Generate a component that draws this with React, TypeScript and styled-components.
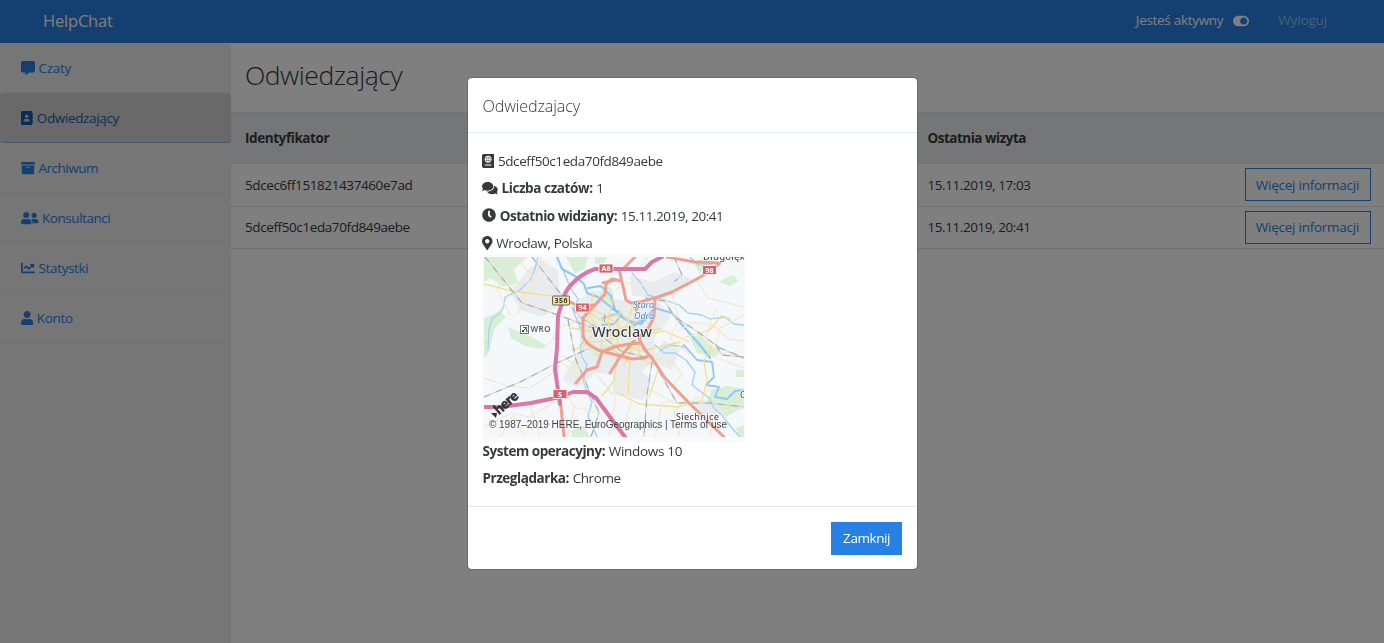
import React from "react";
import styled, { createGlobalStyle } from "styled-components";
import {
  FaAddressBook,
  FaArchive,
  FaChartLine,
  FaClock,
  FaCommentAlt,
  FaComments,
  FaMapMarkerAlt,
  FaPassport,
  FaToggleOn,
  FaUser,
  FaUserFriends,
} from "react-icons/fa";

const GlobalStyle = createGlobalStyle`
  *, *::before, *::after { box-sizing: border-box; }
  body {
    margin: 0;
    overflow: hidden;
    background: #fff;
    color: #373a3c;
    font-family: "Open Sans", "Noto Sans", sans-serif;
    font-size: 13.5px;
    line-height: 20.4px;
  }
`;

const Text = styled.span<{ $track?: number }>`
  letter-spacing: ${(p) => p.$track ?? 0}px;
  white-space: nowrap;
`;

/* Glyph widths follow the icon's own aspect ratio, given in em. */
const Icon = styled.span<{ $width: number }>`
  display: flex;
  flex: none;
  width: ${(p) => p.$width}em;
  margin: -1px 0 0 -0.5px;
  font-size: 14px;
  svg { width: 100%; height: 1em; }
`;

const Page = styled.div`
  display: flex;
  flex-direction: column;
  height: 643px;
`;

const Navbar = styled.header`
  display: flex;
  align-items: center;
  height: 43px;
  padding: 0 57px 0 43px;
  background: #2780e3;
  color: #fff;
`;

const Brand = styled.div`
  flex: 1;
  font-size: 16.5px;
`;

const Status = styled.div`
  display: flex;
  align-items: center;
  gap: 10px;
  margin: -2px 29px 0 0;
  svg { font-size: 16px; }
`;

const Logout = styled.a`
  margin-top: -2px;
  color: rgba(255, 255, 255, 0.5);
`;

const Columns = styled.div`
  display: flex;
  flex: 1;
`;

const Sidebar = styled.nav`
  width: 231px;
  background: #ececec;
`;

const NavItem = styled.a<{ $active?: boolean }>`
  display: flex;
  align-items: center;
  gap: 3.5px;
  height: 50px;
  padding: 2px 0 0 21.5px;
  border-bottom: 1px solid ${(p) => (p.$active ? "#8fb0dc" : "#e4e4e4")};
  border-radius: ${(p) => (p.$active ? "4px" : "0")};
  background: ${(p) => (p.$active ? "#d3d3d3" : "transparent")};
  color: ${(p) => (p.$active ? "#165ba8" : "#2780e3")};
`;

const Content = styled.main`
  flex: 1;
`;

const Title = styled.h1`
  margin: 0;
  height: 69px;
  padding: 14px 0 0 14px;
  font-size: 26.5px;
  line-height: 36px;
  font-weight: 300;
`;

const Row = styled.div<{ $head?: boolean }>`
  display: grid;
  grid-template-columns: 682.5px 1fr auto;
  align-items: center;
  height: ${(p) => (p.$head ? "52px" : "42.5px")};
  padding: 0 13.5px 0 14px;
  border-top: ${(p) => (p.$head ? "1px" : "0")} solid #dee2e6;
  border-bottom: 1px solid #dee2e6;
  background: ${(p) => (p.$head ? "#e9ecef" : "#fff")};
  font-weight: ${(p) => (p.$head ? 700 : 400)};
`;

const OutlineButton = styled.button`
  width: 126px;
  height: 33px;
  padding: 0;
  border: 1px solid #2780e3;
  background: transparent;
  color: #2780e3;
  font: inherit;
`;

const Backdrop = styled.div`
  position: fixed;
  inset: 0;
  display: flex;
  justify-content: center;
  align-items: flex-start;
  padding: 78px 0 0 1px;
  background: rgba(0, 0, 0, 0.5);
`;

const Dialog = styled.section`
  display: flex;
  flex-direction: column;
  width: 449px;
  height: 491px;
  border-radius: 4px;
  background: #fff;
  box-shadow: 0 0 0 1px rgba(0, 0, 0, 0.15);
`;

const DialogHeader = styled.h5`
  display: flex;
  align-items: center;
  height: 55px;
  margin: 0;
  padding: 2px 0 0 14.5px;
  border-bottom: 1px solid #e4e9ea;
  font-size: 16.2px;
  font-weight: 300;
`;

const DialogBody = styled.div`
  flex: 1;
  padding: 18px 14.5px 0;
`;

const Detail = styled.p`
  display: flex;
  align-items: center;
  gap: 3.7px;
  height: 20.4px;
  margin: 0 0 7px;
`;

const MapFrame = styled.figure`
  width: 264px;
  height: 188px;
  margin: -7px 0 -1px -1px;
  padding: 3px 2px 5px 2.5px;
  background: #f8fafc;
  svg { display: block; }
`;

const DialogFooter = styled.footer`
  display: flex;
  justify-content: flex-end;
  align-items: center;
  height: 63px;
  padding: 0 15px;
  border-top: 1px solid #e6e6e6;
`;

const PrimaryButton = styled.button`
  width: 71px;
  height: 33px;
  padding: 0;
  border: 1px solid #2780e3;
  background: #2780e3;
  color: #fff;
  font: inherit;
`;

const navigation = [
  { label: "Czaty", icon: FaCommentAlt, width: 1, track: -0.3 },
  { label: "Odwiedzający", icon: FaAddressBook, width: 0.875, active: true, track: -0.35 },
  { label: "Archiwum", icon: FaArchive, width: 1, track: -0.5 },
  { label: "Konsultanci", icon: FaUserFriends, width: 1.25, track: -0.45 },
  { label: "Statystki", icon: FaChartLine, width: 1, track: -0.35 },
  { label: "Konto", icon: FaUser, width: 0.875, track: -0.3 },
];

const visitors = [
  { id: "5dcec6ff151821437460e7ad", seen: "15.11.2019, 17:03" },
  { id: "5dceff50c1eda70fd849aebe", seen: "15.11.2019, 20:41" },
];

const greens = [
  "M484 257h44l-14 12 4 14-14 4-14-9-6 4z",
  "M566 257h22l-3 12-10 4z",
  "M595 257h12l-4 8-8-1z",
  "M484 318l16-7 6 6-12 12-4 21h-6z",
  "M508 327l22 9 17 10-6 3-16-3-14-8z",
  "M600 292l10-6 4 8-3 9-12-2z",
  "M692 262l16-5h10l-6 8-12 8z",
  "M719 282l14-7 6 6-10 5z",
  "M690 339l10-5 9 11 12 6-6 6-18-4z",
  "M711 390l16-4 17 3v18l-18 10-8-10-10-4z",
  "M699 345h10l2 12-10-3z",
  "M736 370h8v7h-8z",
  "M484 347l7 2-5 8h-2z",
  "M587 345l10 2 6 8-8 2z",
  "M571 431l13-5 6 11h-18z",
  "M736 428l8-3v12h-5z",
];
const urban = [
  "M510 292l18-22 14-11 16 12 2 34-18 12-22-7z",
  "M576 300l22-10 12 8 25 5 24-1 12 14-17 22 2 24-26 16-36-6-13-20z",
  "M630 276l24 6 20-10 22 8-20 14-20 5-24-4z",
  "M664 340l16 10-8 20-20-9z",
  "M562 380l18-30 16 6-4 20-14 12z",
  "M690 402l30-4 8 14-20 8z",
  "M613 376l25-9 14 15-9 18-30-6z",
];
const minorRoads = [
  "M484 378l24 8 22 2 20-13 10-9",
  "M484 427l28-14 17 4 31-18 30-5",
  "M500 437l13-22 12 22",
  "M530 404l10 33",
  "M497 270l17 18 21-9 21 13",
  "M510 315l-13-27 23-26 14 16-13 22 27 13",
  "M541 257l-9 30-14 26",
  "M548 345l14-19 20-6",
  "M560 362l19 12 16-1 18 22",
  "M564 388l10 19 27 7",
  "M574 407l-6 30",
  "M585 392l-5-23-17-13",
  "M609 437l8-48 13-20",
  "M613 385l40 6 21 12 17-1 20-13",
  "M648 257l-14 24-18 8",
  "M625 282l24 4 16 11 11 22",
  "M671 291l8 28-9 20 20 15",
  "M696 278l12 20 36 9",
  "M703 257l-4 16",
  "M678 331l16-9 20 4 14 13 16 2",
  "M716 308l-10 30 9 16 20-2",
  "M710 438l2-25 32-5",
  "M652 358l20 4 10 12-12 15",
  "M626 376l5 28-11 33",
  "M686 399l-12 14 6 24",
  "M744 315l-24 13-6 29 30 11",
  "M655 437l7-34 12-2",
];
const yellowRoads = [
  "M484 284l28 7 48 6 22 12 30 17",
  "M583 306l20 8 19 14 18 7 25-4 24 11",
  "M593 292l-3 25 11 14 1 23",
  "M571 328l26 4 27-4 28-14",
  "M613 300l-5 20 5 29 18 15",
  "M583 343l22-2 26-9 31-3",
  "M620 310l-4 28 14 24-2 32",
  "M601 320l20-7 17 19 1 27",
  "M634 303l-8 24 7 20-9 18",
  "M596 350l21-6 25 7 38-9",
  "M618 352l-4 29-12 15",
  "M640 359l19 8-10 30",
  "M712 345l-8 16 3 20-5 19-23 7-40-3-21-11",
  "M686 337l24-7 11-14 10 3",
  "M583 310l12 22-12 15-11 3",
];
const railways = [
  "M485 257l37 46 36 12 35 13",
  "M532 257l31 40 17 20 25 16",
  "M484 397l36-15 37-19 33-15",
  "M605 315l-2 22 18 14 31 8 25 44 32 0 35 4",
  "M646 298l18 3 11 16 20 13 25 18 24 10",
  "M652 362l-5 33-3 42",
  "M568 320l8 40 23 53-8 24",
  "M674 257l8 18-7 6",
  "M716 345l6 10 22 2",
];

function VisitorMap() {
  return (
    <svg width="260" height="180" viewBox="484 257 260 180" role="img" aria-label="Wroclaw">
      <rect x="484" y="257" width="260" height="180" fill="#f4f8fb" />
      <g fill="#e9ecef">{urban.map((d) => <path key={d} d={d} />)}</g>
      <g fill="#d9efd5">{greens.map((d) => <path key={d} d={d} />)}</g>
      <g fill="none" strokeLinejoin="round" strokeLinecap="round">
        <g stroke="#a2d0f8" strokeWidth="1.3">
          <path d="M538 257l-3 12-5 11-10 10-15 7-1 9-4 7-8 6-3 10-1 20" />
          <path d="M659 298l20 7 9 8 14 2 8 4 15-2 9 7 10 1" />
          <path d="M580 345l2 12 5 8-4 17 9 20-4 14 9 21" />
          <path d="M655 345l9 8 11 0 11 7 9 12-3 13 17 13 5 10 8 7 9 12 9 10" />
          <path d="M562 267l8 20 8 12-5 12 12 27-4 7M632 273l8 9 8 13 11 3M690 257l8 8 14 0M661 350l9-5 14 2" />
        </g>
        <g stroke="#90c8f8" strokeWidth="2.2">
          <path d="M557 257l5 12 13 7 9 8 3 9 11 4 9 7 12 9 10 8 12 3 14-16 17 5 12 14 16 18 10 13M588 288l13-2 10 10 4 14M603 318l14-4 18 11 8-6" />
          <path d="M684 345l13 15 15 2 2 15-8 8 13 2-4 10 12 2 8-8 10-1" strokeWidth="1.8" />
        </g>
        <path d="M612 309l10 5-8 10-12 1" stroke="#85c0f5" strokeWidth="1.4" />
        <g stroke="#f3e8c9" strokeWidth="1.2">{minorRoads.map((d) => <path key={d} d={d} />)}</g>
        <g stroke="#f0e08e" strokeWidth="1.3">{yellowRoads.map((d) => <path key={d} d={d} />)}</g>
        <g stroke="#ced0d2" strokeWidth="1">{railways.map((d) => <path key={d} d={d} />)}</g>
        <g stroke="#a9abad" strokeWidth="1.1" strokeDasharray="6 7">{railways.map((d) => <path key={d} d={d} />)}</g>
        <g stroke="#f0a090" strokeWidth="3">
          <path d="M563 298l17 9 15-2 10-11 1-10 6-5 9 2M635 257l-12 12-4 0 3 13 4 18 5 3 8-1-3 8M636 303l19-5 17-6 23-12 14-8 11-9-25-1-28-5" />
          <path d="M595 305l-12 13 0 19 5 7 10 6 11 3 23 6 13-1 4-3-8-12-12 1-15 3-12 5-5 15-10 3-11 13M655 300l-1 17-5 10-10 11 5 11 8 9 13 20 24 25 35 34M610 373l10-16 9-10 5-6M560 397l4 40M615 280l-12 3" />
        </g>
        <path d="M662 257l-10 5-7 7h-50c-13 4-27 16-31 27l-6 20-1 32-2 21 5 35M484 407h17l30-4 29-6 13-5 14 0 9 6 14 19 15 20" stroke="#da78a5" strokeWidth="4" />
      </g>
      <g stroke="#fff" strokeWidth=".8" fill="#d7636d">
        <rect x="599" y="264" width="14" height="9" rx="1" />
        <rect x="575.500" y="303" width="14" height="9" rx="1" />
        <rect x="702.500" y="265.500" width="14" height="9" rx="1" />
        <rect x="553" y="389.500" width="14" height="9" rx="1" />
      </g>
      <rect x="552.500" y="296" width="17" height="9" rx="1" fill="#f0e3a4" stroke="#6b6550" />
      <g fontFamily="Noto Sans, sans-serif" fontSize="7" fontWeight="700" textAnchor="middle">
        <g fill="#fff">
          <text x="606" y="271">A8</text>
          <text x="582.500" y="310">94</text>
          <text x="709.500" y="272.500">98</text>
          <text x="560" y="396.500">5</text>
        </g>
        <text x="561" y="303" fill="#39362b" textLength="13">356</text>
      </g>
      <rect x="520.500" y="325.500" width="8" height="8" fill="#fff" stroke="#777" />
      <path d="M522 332l5-5m-4 0l3 1 1 4m-5-2l2 2" fill="none" stroke="#444" />
      <g fontFamily="Noto Sans, sans-serif" stroke="#fff" strokeWidth="1.6" strokeOpacity=".8" paintOrder="stroke" strokeLinejoin="round">
        <text x="530.500" y="332" fontSize="8" fontWeight="600" fill="#555b66" textLength="20">WRO</text>
        <text x="592" y="337" fontSize="14.500" fontWeight="500" fill="#373d48" textLength="60">Wroclaw</text>
        <g fill="#4086c6" fontSize="9" fontStyle="italic" strokeWidth="1">
          <text x="633" y="308" textLength="21">Stara</text>
          <text x="634" y="319" textLength="20">Odra</text>
        </g>
        <text x="703" y="260" fontSize="9.500" fontWeight="500" fill="#4a505c" textLength="42">Długołęk</text>
        <text x="676" y="420" fontSize="9" fontWeight="500" fill="#4d4a62" textLength="43">Siechnice</text>
        <text x="740" y="398" fontSize="9" fill="#444">O</text>
      </g>
      <path d="M491 413l5 5 1-5z" fill="#303236" />
      <text transform="translate(499 415) rotate(-41)" fontFamily="Lato, sans-serif" fontSize="14" fontWeight="900" fill="#303236" stroke="#303236" strokeWidth=".5" textLength="27">here</text>
      <text x="489" y="427.500" fontFamily="Liberation Sans, sans-serif" fontSize="10" fill="#454545" textLength="238">© 1987–2019 HERE, EuroGeographics | Terms of use</text>
    </svg>
  );
}

export default function App() {
  return (
    <>
      <GlobalStyle />
      <Page>
        <Navbar>
          <Brand><Text $track={-0.2}>HelpChat</Text></Brand>
          <Status><Text $track={-0.3}>Jesteś aktywny</Text><FaToggleOn /></Status>
          <Logout><Text $track={-0.15}>Wyloguj</Text></Logout>
        </Navbar>
        <Columns>
          <Sidebar>
            {navigation.map(({ label, icon: Glyph, width, active, track }) => (
              <NavItem key={label} $active={active}>
                <Icon $width={width}><Glyph /></Icon>
                <Text $track={track}>{label}</Text>
              </NavItem>
            ))}
          </Sidebar>
          <Content>
            <Title><Text $track={-0.45}>Odwiedzający</Text></Title>
            <Row $head>
              <Text $track={-0.42}>Identyfikator</Text>
              <Text $track={-0.5}>Ostatnia wizyta</Text>
            </Row>
            {visitors.map((visitor) => (
              <Row key={visitor.id}>
                <Text $track={-0.4}>{visitor.id}</Text>
                <Text $track={-0.43}>{visitor.seen}</Text>
                <OutlineButton><Text $track={-0.25}>Więcej informacji</Text></OutlineButton>
              </Row>
            ))}
          </Content>
        </Columns>
      </Page>
      <Backdrop>
        <Dialog role="dialog" aria-modal="true">
          <DialogHeader><Text $track={-0.15}>Odwiedzajacy</Text></DialogHeader>
          <DialogBody>
            <Detail><Icon $width={0.875}><FaPassport /></Icon><Text $track={-0.4}>5dceff50c1eda70fd849aebe</Text></Detail>
            <Detail><Icon $width={1.125}><FaComments /></Icon><Text as="b" $track={-0.4}>Liczba czatów:</Text><Text>1</Text></Detail>
            <Detail><Icon $width={1}><FaClock /></Icon><Text as="b" $track={-0.46}>Ostatnio widziany:</Text><Text $track={-0.45}>15.11.2019, 20:41</Text></Detail>
            <Detail><Icon $width={0.75}><FaMapMarkerAlt /></Icon><Text $track={-0.37}>Wrocław, Polska</Text></Detail>
            <MapFrame><VisitorMap /></MapFrame>
            <Detail><Text as="b" $track={-0.45}>System operacyjny:</Text><Text $track={-0.3}>Windows 10</Text></Detail>
            <Detail><Text as="b" $track={-0.45}>Przeglądarka:</Text><Text $track={-0.4}>Chrome</Text></Detail>
          </DialogBody>
          <DialogFooter><PrimaryButton><Text $track={-0.45}>Zamknij</Text></PrimaryButton></DialogFooter>
        </Dialog>
      </Backdrop>
    </>
  );
}
